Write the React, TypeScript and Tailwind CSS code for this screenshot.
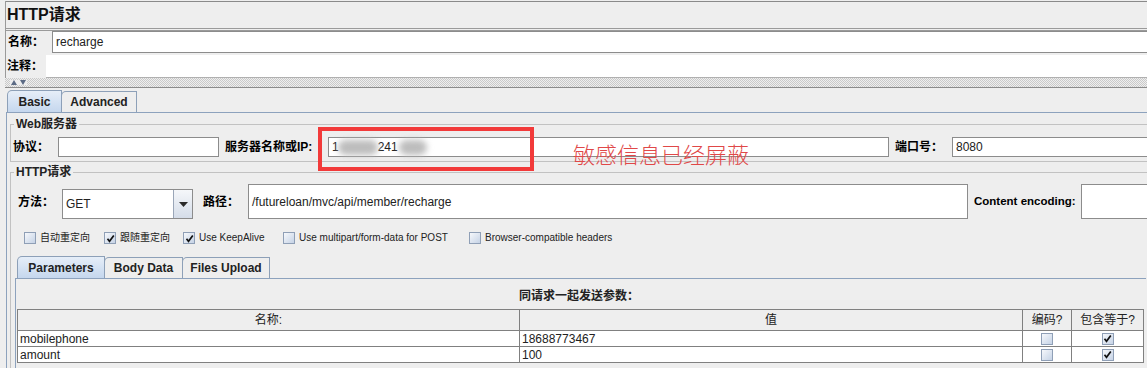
import React from "react";

function Cb({ checked }: { checked?: boolean }) {
  return (
    <span className="relative flex h-[12px] w-[12px] shrink-0 items-center justify-center border border-[#8f9fb6] bg-gradient-to-br from-[#f6f8fb] to-[#c6d3e6]">
      {checked && (
        <svg width="9" height="9" viewBox="0 0 9 9" className="block">
          <path d="M1.5 4.8 L3.5 7.3 L7.8 1.6" fill="none" stroke="#111" strokeWidth="1.7" />
        </svg>
      )}
    </span>
  );
}

function CbItem({ checked, label, w }: { checked?: boolean; label: string; w: string }) {
  return (
    <div className={`flex items-center gap-[4px] ${w}`}>
      <Cb checked={checked} />
      <span className="text-[10px] leading-[12px] text-[#222] whitespace-nowrap">{label}</span>
    </div>
  );
}

function Tab({ label, selected, w }: { label: string; selected?: boolean; w: string }) {
  return (
    <div
      className={`flex items-center justify-center border border-b-0 border-[#8da0b8] rounded-tl-[5px] text-[12px] font-bold text-[#222] ${w} ${
        selected
          ? "h-[22px] bg-gradient-to-b from-[#e6eef8] to-[#c5d7ee] z-10"
          : "h-[21px] bg-[#eeeeee] -ml-[1px]"
      }`}
    >
      {label}
    </div>
  );
}

const input = "bg-white border border-[#8c8c8c] text-[12px] text-[#222] px-[3px] flex items-center";

export default function App() {
  return (
    <div className="relative w-[1147px] h-[368px] overflow-hidden bg-[#eeeeee] text-black [font-family:'Liberation_Sans','Noto_Sans_CJK_SC',sans-serif]">
      {/* top section */}
      <div className="ml-[5px] border-l border-[#9a9a9a]">
        <div className="mt-[1px] h-[30px] border-t border-[#8a8a8a] border-b-[3px] border-b-[#9a9a9a] [border-bottom-style:double] flex items-center pl-[1px] text-[16px] font-bold text-[#111]">
          HTTP请求
        </div>
        <div className="flex h-[22px] items-center">
          <div className="w-[46px] pl-[2px] text-[12px] font-bold">名称：</div>
          <div className={`${input} flex-1 h-full border-r-0`}>recharge</div>
        </div>
        <div className="flex h-[25px] items-end">
          <div className="w-[40px] self-center pl-[1px] text-[12px] font-bold">注释：</div>
          <div className="flex-1 h-[23px] bg-white border-b border-[#b0b0b0]" />
        </div>
      </div>
      {/* divider */}
      <div className="relative ml-[5px] h-[10px] border-b border-[#8a8a8a] bg-[repeating-conic-gradient(#c9c9c9_0_25%,#eeeeee_0_50%)] bg-[length:2px_2px]">
        <div className="absolute left-[5px] top-[2px] flex gap-[3px] bg-[#eeeeee] px-[1px]">
          <svg width="6" height="5" viewBox="0 0 6 5"><path d="M0 5 L3 0 L6 5 Z" fill="#5c6b85" /></svg>
          <svg width="6" height="5" viewBox="0 0 6 5"><path d="M0 0 L3 5 L6 0 Z" fill="#5c6b85" /></svg>
        </div>
      </div>
      {/* tabs */}
      <div className="mt-[1px] flex h-[23px] items-end pl-[7px]">
        <Tab label="Basic" selected w="w-[55px]" />
        <Tab label="Advanced" w="w-[76px]" />
      </div>
      <div className="ml-[6px] border-l border-t border-[#8da2bd] h-[260px]">
        {/* Web服务器 */}
        <fieldset className="mt-[4px] ml-[3px] mr-[-20px] min-w-0 border border-[#c2c2c2]">
          <legend className="ml-[3px] px-[2px] text-[12px] leading-[14px] font-bold text-[#222]">Web服务器</legend>
          <div className="flex h-[20px] items-center mt-[6px] mb-[4px] pl-[2px]">
            <div className="w-[45px] text-[12px] font-bold">协议：</div>
            <div className={`${input} w-[161px] h-full`} />
            <div className="ml-[6px] w-[103px] text-[12px] font-bold whitespace-nowrap">服务器名称或IP:</div>
            <div className={`${input} w-[561px] h-full`}>
              <span>1</span>
              <span className="-ml-[1px] inline-block h-[15px] w-[40px] rounded-full bg-[#bdbdbd] blur-[3px]" />
              <span>241</span>
              <span className="ml-[1px] inline-block h-[15px] w-[28px] rounded-full bg-[#bdbdbd] blur-[3px]" />
            </div>
            <div className="ml-[6px] w-[57px] text-[12px] font-bold">端口号：</div>
            <div className={`${input} flex-1 h-full`}>8080</div>
          </div>
        </fieldset>
        {/* HTTP请求 */}
        <fieldset className="mt-[3px] ml-[3px] mr-[-20px] min-w-0 border border-[#c2c2c2] h-[220px]">
          <legend className="ml-[3px] px-[2px] text-[12px] leading-[14px] font-bold text-[#222]">HTTP请求</legend>
          <div className="mt-[5px] flex h-[35px] items-center pl-[7px]">
            <div className="w-[44px] text-[12px] font-bold">方法：</div>
            <div className="flex h-[30px] w-[131px] self-end border border-[#8c8c8c] bg-white">
              <div className="flex flex-1 items-center pl-[3px] text-[12px] text-[#222]">GET</div>
              <div className="flex w-[19px] items-center justify-center border-l border-[#9aa6b8] bg-gradient-to-b from-[#f5f7fa] to-[#d5dde9]">
                <svg width="9" height="5" viewBox="0 0 9 5"><path d="M0 0 L9 0 L4.5 5 Z" fill="#2a2a2a" /></svg>
              </div>
            </div>
            <div className="ml-[10px] w-[45px] text-[12px] font-bold">路径：</div>
            <div className={`${input} w-[720px] h-full`}>/futureloan/mvc/api/member/recharge</div>
            <div className="ml-[6px] w-[107px] text-[11.5px] font-bold whitespace-nowrap">Content encoding:</div>
            <div className={`${input} flex-1 h-full`} />
          </div>
          <div className="mt-[11px] flex h-[16px] items-center pl-[13px]">
            <CbItem label="自动重定向" w="w-[80px]" />
            <CbItem label="跟随重定向" checked w="w-[79px]" />
            <CbItem label="Use KeepAlive" checked w="w-[100px]" />
            <CbItem label="Use multipart/form-data for POST" w="w-[186px]" />
            <CbItem label="Browser-compatible headers" w="w-[200px]" />
          </div>
          {/* inner tabs */}
          <div className="mt-[9px] flex h-[23px] items-end pl-[6px]">
            <Tab label="Parameters" selected w="w-[88px]" />
            <Tab label="Body Data" w="w-[79px]" />
            <Tab label="Files Upload" w="w-[88px]" />
          </div>
          <div className="ml-[4px] mr-[20px] border-l border-t border-[#8da2bd] h-[120px]">
            <div className="mt-[10px] h-[14px] pr-[4px] text-center text-[12px] leading-[14px] font-bold text-[#222]">
              同请求一起发送参数：
            </div>
            <div className="mt-[6px] ml-[1px] w-[1127px] border-l border-r border-[#808080] text-[12px] text-[#222]">
              <div className="flex h-[22px] border-t border-b border-[#808080]">
                <div className="flex w-[502px] items-center justify-center border-r border-[#808080]">名称:</div>
                <div className="flex w-[503px] items-center justify-center border-r border-[#808080]">值</div>
                <div className="flex w-[49px] items-center justify-center border-r border-[#808080]">编码?</div>
                <div className="flex flex-1 items-center justify-center">包含等于?</div>
              </div>
              {[
                ["mobilephone", "18688773467"],
                ["amount", "100"],
              ].map(([k, v]) => (
                <div key={k} className="flex h-[16px] border-b border-[#808080] bg-white">
                  <div className="flex w-[502px] items-center pl-[2px] border-r border-[#808080]">{k}</div>
                  <div className="flex w-[503px] items-center pl-[2px] border-r border-[#808080]">{v}</div>
                  <div className="flex w-[49px] items-center justify-center border-r border-[#808080]">
                    <Cb />
                  </div>
                  <div className="flex flex-1 items-center justify-center">
                    <Cb checked />
                  </div>
                </div>
              ))}
            </div>
          </div>
        </fieldset>
      </div>

      {/* annotation overlay */}
      <div className="absolute left-[318px] top-[127px] h-[44px] w-[216px] border-[4px] border-[#f23a3a]" />
      <div className="absolute left-[573px] top-[141px] text-[22px] leading-[24px] text-[#e04848] font-light [font-family:'Noto_Sans_CJK_SC',sans-serif]">
        敏感信息已经屏蔽
      </div>
    </div>
  );
}
